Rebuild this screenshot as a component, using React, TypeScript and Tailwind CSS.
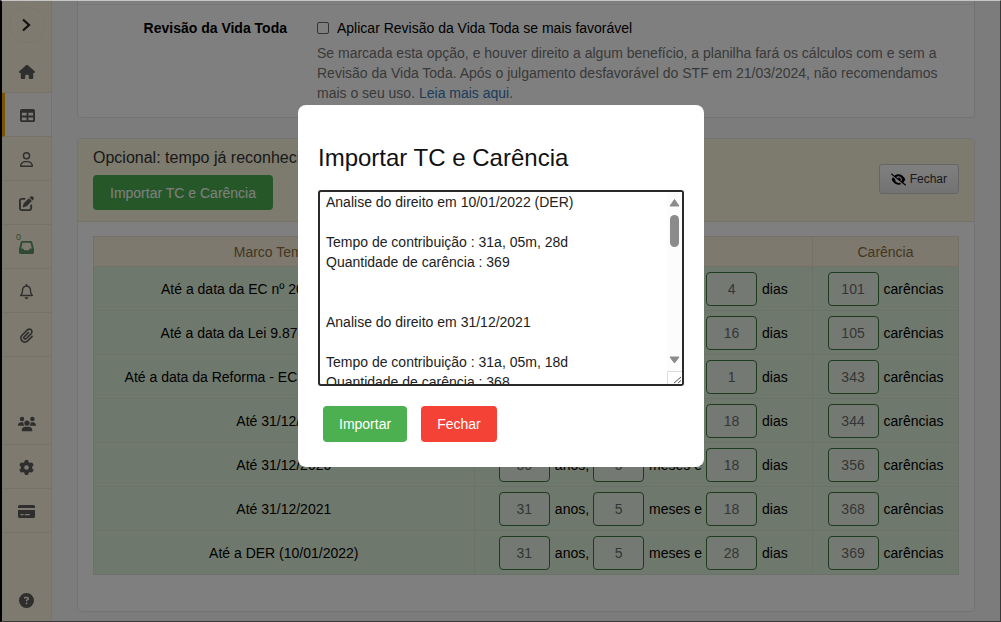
import { useState } from "react";
import type { ReactNode } from "react";
import {
  FaHouse,
  FaTable,
  FaRegUser,
  FaPenToSquare,
  FaInbox,
  FaRegBell,
  FaPaperclip,
  FaUsers,
  FaGear,
  FaCircleQuestion,
  FaEyeSlash,
} from "react-icons/fa6";

type Row = {
  label: string;
  anos: string;
  meses: string;
  dias: string;
  carencia: string;
};

const rows: Row[] = [
  { label: "Até a data da EC nº 20/98 (16/12/1998)", anos: "8", meses: "5", dias: "4", carencia: "101" },
  { label: "Até a data da Lei 9.876/99 (28/11/1999)", anos: "9", meses: "4", dias: "16", carencia: "105" },
  { label: "Até a data da Reforma - EC nº 103/19 (13/11/2019)", anos: "29", meses: "4", dias: "1", carencia: "343" },
  { label: "Até 31/12/2019", anos: "29", meses: "5", dias: "18", carencia: "344" },
  { label: "Até 31/12/2020", anos: "30", meses: "5", dias: "18", carencia: "356" },
  { label: "Até 31/12/2021", anos: "31", meses: "5", dias: "18", carencia: "368" },
  { label: "Até a DER (10/01/2022)", anos: "31", meses: "5", dias: "28", carencia: "369" },
];

const imported = `Analise do direito em 10/01/2022 (DER)

Tempo de contribuição : 31a, 05m, 28d
Quantidade de carência : 369


Analise do direito em 31/12/2021

Tempo de contribuição : 31a, 05m, 18d
Quantidade de carência : 368


Analise do direito em 31/12/2020

Tempo de contribuição : 30a, 05m, 18d
Quantidade de carência : 356
`;

function CardIcon() {
  return (
    <svg viewBox="0 0 17 13" className="h-[13px] w-[17px]" fill="currentColor" aria-hidden="true">
      <path d="M1.5 0h14A1.5 1.5 0 0 1 17 1.5V3H0V1.5A1.5 1.5 0 0 1 1.500 0z" />
      <path
        fillRule="evenodd"
        d="M0 5h17v6.500a1.500 1.500 0 0 1-1.500 1.500h-14A1.500 1.500 0 0 1 0 11.500zM2.500 9v1.300h3V9zM6.800 9v1.300h5V9z"
      />
    </svg>
  );
}

function NavItem({
  label,
  active,
  last,
  children,
}: {
  label: string;
  active?: boolean;
  last?: boolean;
  children: ReactNode;
}) {
  return (
    <a
      href="#"
      aria-label={label}
      className={`relative flex h-11 shrink-0 items-center justify-center pt-0.5 text-base text-[#5c5c5c] ${
        last ? "" : "border-b border-[#ece5d2]"
      } ${active ? "border-l-3 border-l-[#f5a800] bg-[#fdfbf6] pr-0.5" : ""}`}
    >
      {children}
    </a>
  );
}

function Sidebar() {
  return (
    <nav className="flex w-[50px] shrink-0 flex-col border-r border-[#ece6d8] bg-[#fcf5e1]">
      <div className="flex h-12 shrink-0 items-center justify-center">
        <button
          type="button"
          aria-label="Expandir menu"
          className="flex size-9 items-center justify-center rounded-full border border-[#f3ecda] pr-0.5"
        >
          <svg viewBox="0 0 10 14" className="h-3.5 w-2.5" fill="none" stroke="#222" strokeWidth="2.200" aria-hidden="true">
            <path d="M2 1.500 8 7l-6 5.500" />
          </svg>
        </button>
      </div>
      <NavItem label="Início"><FaHouse /></NavItem>
      <NavItem label="Planilhas" active><FaTable className="text-[15px]" /></NavItem>
      <NavItem label="Clientes"><FaRegUser className="text-[15px]" /></NavItem>
      <NavItem label="Editar"><FaPenToSquare className="text-[15px]" /></NavItem>
      <NavItem label="Caixa de entrada">
        <span className="absolute top-2 left-3.5 text-[9px] leading-none text-[#5a8f62]">0</span>
        <FaInbox className="text-[15px] text-[#5f9468]" />
      </NavItem>
      <NavItem label="Notificações"><FaRegBell className="text-[15px]" /></NavItem>
      <NavItem label="Anexos"><FaPaperclip className="text-[15px]" /></NavItem>
      <div className="min-h-4 flex-1" />
      <NavItem label="Equipe"><FaUsers className="text-lg" /></NavItem>
      <NavItem label="Configurações"><FaGear className="text-[15px]" /></NavItem>
      <NavItem label="Pagamentos"><CardIcon /></NavItem>
      <div className="min-h-4 flex-1" />
      <NavItem label="Ajuda" last><FaCircleQuestion className="text-[15px]" /></NavItem>
    </nav>
  );
}

function NumberField({ value, label, unit }: { value: string; label: string; unit: string }) {
  return (
    <label className="flex items-center gap-[5px]">
      <input
        defaultValue={value}
        aria-label={label}
        className="h-[34px] w-[51px] rounded border border-[#3c763d] bg-[#eaf3e8] text-center text-sm text-[#6b6b6b]"
      />
      <span className="whitespace-nowrap">{unit}</span>
    </label>
  );
}

function RevisionPanel() {
  return (
    <section className="rounded-b border border-t-0 border-[#e6e6e6] bg-white">
      <div className="mt-[3px] flex min-h-[113px] gap-[30px] border-t border-[#eeeeee] pt-[13px]">
        <label htmlFor="revisao" className="w-[209px] shrink-0 text-right text-sm leading-5 font-bold">
          Revisão da Vida Toda
        </label>
        <div className="flex-1 pr-6">
          <div className="flex items-center gap-2">
            <input
              id="revisao"
              type="checkbox"
              className="size-3 appearance-none rounded-[2px] border border-[#666] bg-white"
            />
            <label htmlFor="revisao" className="text-sm leading-5">
              Aplicar Revisão da Vida Toda se mais favorável
            </label>
          </div>
          <p className="mt-[5px] text-sm leading-5 text-[#737373]">
            Se marcada esta opção, e houver direito a algum benefício, a planilha fará os cálculos com e sem a Revisão
            da Vida Toda. Após o julgamento desfavorável do STF em 21/03/2024, não recomendamos mais o seu uso.{" "}
            <a href="#" className="text-[#337ab7]">Leia mais aqui</a>.
          </p>
        </div>
      </div>
    </section>
  );
}

function TimePanel() {
  return (
    <section className="rounded border border-[#e6e6e6] bg-white">
      <header className="flex items-center justify-between rounded-t border-b border-[#ebe4cc] bg-[#fbf6dc] px-[15px] pt-[9px] pb-[11px]">
        <div>
          <h2 className="text-base leading-5 text-[#333]">Opcional: tempo já reconhecido</h2>
          <button type="button" className="mt-[7px] h-[35px] rounded bg-[#4caf50] px-[17px] text-sm text-white">
            Importar TC e Carência
          </button>
        </div>
        <button
          type="button"
          className="flex h-[30px] items-center gap-1 rounded-[3px] border border-[#ccc] bg-linear-to-b from-white to-[#e6e6e6] px-[11px] text-xs text-[#333]"
        >
          <FaEyeSlash className="text-[15px] text-black" />
          Fechar
        </button>
      </header>
      <div className="px-[15px] pt-[14px] pb-9">
        <table className="w-full table-fixed border-collapse border border-[#dddddd] text-sm leading-5">
          <colgroup>
            <col className="w-[44%]" />
            <col />
            <col className="w-[146px]" />
          </colgroup>
          <thead>
            <tr className="h-[30px] bg-[#fcf3dc] text-[#8a6d3b]">
              <th className="border border-[#e8e0ca] font-normal">Marco Temporal</th>
              <th className="border border-[#e8e0ca] font-normal">Tempo</th>
              <th className="border border-[#e8e0ca] font-normal">Carência</th>
            </tr>
          </thead>
          <tbody>
            {rows.map((r) => (
              <tr key={r.label} className="h-11 bg-[#dff0d8]">
                <td className="border border-[#d6e7d0] text-center">{r.label}</td>
                <td className="border border-[#d6e7d0]">
                  <div className="flex items-center justify-center gap-1">
                    <NumberField value={r.anos} label={`Anos, ${r.label}`} unit="anos," />
                    <NumberField value={r.meses} label={`Meses, ${r.label}`} unit="meses e" />
                    <NumberField value={r.dias} label={`Dias, ${r.label}`} unit="dias" />
                  </div>
                </td>
                <td className="border border-[#d6e7d0]">
                  <div className="flex justify-center">
                    <NumberField value={r.carencia} label={`Carência, ${r.label}`} unit="carências" />
                  </div>
                </td>
              </tr>
            ))}
          </tbody>
        </table>
      </div>
    </section>
  );
}

function ImportDialog({ onClose }: { onClose: () => void }) {
  return (
    <div className="absolute inset-0 flex items-start justify-center bg-black/50 pt-[104px]">
      <div
        role="dialog"
        aria-modal="true"
        aria-labelledby="import-title"
        className="w-[406px] rounded-lg bg-white px-5 pt-[37px] pb-[25px]"
      >
        <h1 id="import-title" className="text-2xl leading-8 text-[#111]">Importar TC e Carência</h1>
        <div className="relative mt-4 h-[196px]">
          <textarea
            aria-labelledby="import-title"
            defaultValue={imported}
            className="block size-full resize-none rounded-[3px] border-2 border-[#2a2a2a] pr-5 pl-1.5 text-sm leading-5 text-[#222] outline-none [scrollbar-width:none]"
          />
          <svg
            viewBox="0 0 15 192"
            className="pointer-events-none absolute top-0.5 right-0.5 h-48 w-[15px]"
            aria-hidden="true"
          >
            <path d="M0 0h15v192H0z" fill="#fcfcfc" />
            <path d="M7.500 7.500 12 14H3z" fill="#8b8b8b" stroke="#8b8b8b" strokeLinejoin="round" />
            <rect x="3" y="23" width="9" height="32" rx="4.500" fill="#8b8b8b" />
            <path d="M7.500 171 12 165H3z" fill="#8b8b8b" stroke="#8b8b8b" strokeLinejoin="round" />
            <path d="M.5 192v-12.500H15" fill="#fff" stroke="#dcdcdc" />
            <path d="m7 191 7-6M11 191l3-2.500" fill="none" stroke="#555" />
          </svg>
        </div>
        <div className="mt-5 flex gap-3.5 pl-[5px]">
          <button type="button" className="h-9 rounded bg-[#4caf50] px-4 text-sm text-white">Importar</button>
          <button type="button" onClick={onClose} className="h-9 rounded bg-[#f44336] px-4 text-sm text-white">
            Fechar
          </button>
        </div>
      </div>
    </div>
  );
}

export default function App() {
  const [open, setOpen] = useState(true);
  return (
    <div className="min-h-screen border-t border-r border-b border-l-2 border-t-[#c6c6c6] border-r-[#3a3a3a] border-b-[#3a3a3a] border-l-black font-['Liberation_Sans',Arial,sans-serif] text-black">
      <div className="relative flex min-h-[calc(100vh-2px)]">
        <Sidebar />
        <main className="flex flex-1 flex-col gap-5 bg-[#f9f9fb] pr-[25px] pb-[9px] pl-[25px]">
          <RevisionPanel />
          <TimePanel />
        </main>
        {open && <ImportDialog onClose={() => setOpen(false)} />}
      </div>
    </div>
  );
}
